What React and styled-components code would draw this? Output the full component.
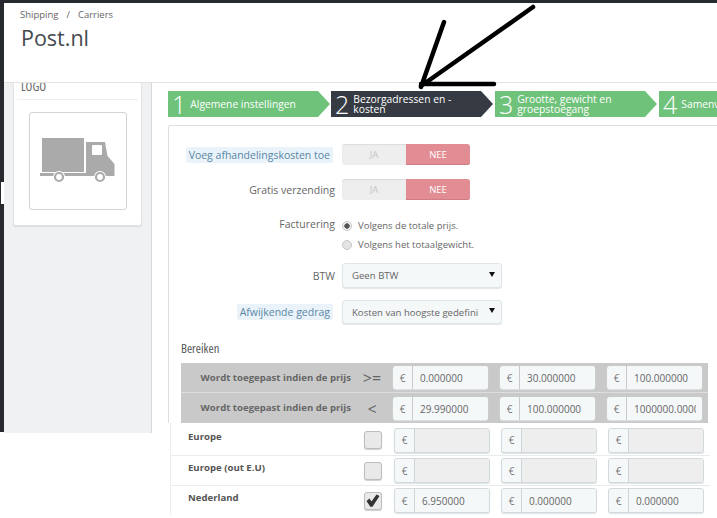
import React from "react"
import styled, { createGlobalStyle } from "styled-components"

const GlobalStyle = createGlobalStyle`
  html, body {
    margin: 0;
    padding: 0;
    background: #fff;
  }
  * {
    box-sizing: border-box;
  }
`

const Page = styled.div`
  position: relative;
  width: 717px;
  height: 518px;
  overflow: hidden;
  background: #fff;
  color: #666;
  font-family: "Open Sans", "Liberation Sans", sans-serif;
`

const TopStrip = styled.div`
  height: 3px;
  background: #262a2e;
`

const Shell = styled.div`
  display: flex;
  align-items: flex-start;
`

const Rail = styled.div`
  position: relative;
  flex: 0 0 4px;
  height: 429px;
  background: #262a2e;
`

const RailNotch = styled.span`
  position: absolute;
  left: 1px;
  top: 179px;
  width: 3px;
  height: 22px;
  background: #fff;
`

const Main = styled.div`
  flex: 1;
  min-width: 0;
`

const Header = styled.header`
  height: 80px;
  padding: 6px 0 0 16px;
  border-bottom: 1px solid #e2e2e2;
`

const Breadcrumb = styled.div`
  display: flex;
  gap: 8px;
  font-size: 9.5px;
  line-height: 11px;
  color: #666;
`

const Title = styled.h1`
  margin: 4px 0 0 1px;
  font-size: 21.5px;
  line-height: 28px;
  font-weight: 400;
  color: #454a4e;
`

const Body = styled.div`
  display: flex;
  align-items: flex-start;
`

const Sidebar = styled.aside`
  flex: 0 0 148px;
  height: 350px;
  padding: 0 9px;
  overflow: hidden;
  background: #eff1f2;
  border-right: 1px solid #d8d8d8;
`

const Card = styled.section`
  margin-top: -8px;
  height: 151px;
  padding: 0 3px;
  background: #fff;
  border: 1px solid #e2e4e5;
  border-radius: 3px;
  box-shadow: 0 1px 1px #d9dbdc;
`

const CardTitle = styled.h3`
  margin: 0;
  height: 24px;
  padding: 4px 0 0 4px;
  border-bottom: 1px solid #eee;
  font-size: 12.5px;
  line-height: 14px;
  font-weight: 400;
  font-stretch: 75%;
  color: #666;
`

const LogoBox = styled.div`
  display: flex;
  align-items: center;
  justify-content: center;
  width: 98px;
  height: 98px;
  margin: 12px 0 0 12px;
  border: 1px solid #d4d4d4;
  border-radius: 3px;
`

const Content = styled.div`
  flex: 1;
  min-width: 0;
  padding: 8px 0 0 16px;
`

const Steps = styled.ol`
  display: flex;
  gap: 1px;
  height: 26px;
  margin: 0;
  padding: 0;
  list-style: none;
`

const Step = styled.li`
  flex: 0 0 ${(p) => (p.$first ? 162 : 163)}px;
  display: flex;
  align-items: center;
  gap: 4px;
  padding-left: 4px;
  color: #fff;
  background: ${(p) => (p.$active ? "#363a42" : "#6fc27a")};
  clip-path: polygon(0 0, 150px 0, 162px 50%, 150px 100%, 0 100%);
`

const StepNumber = styled.span`
  font-size: 25px;
  line-height: 26px;
  font-weight: 300;
`

const StepLabel = styled.span`
  font-size: 10.3px;
  line-height: 10.5px;
  white-space: nowrap;
`

const Panel = styled.div`
  margin-top: 8px;
  height: 298px;
  padding: 18px 0 0 12px;
  border: 1px solid #dedede;
  border-right: 0;
  border-bottom: 0;
  border-radius: 3px 0 0 0;
`

const FormRow = styled.div`
  display: grid;
  grid-template-columns: 152px 160px;
  column-gap: 9px;
  align-items: ${(p) => (p.$top ? "start" : "center")};
  margin-top: ${(p) => p.$gap || 0}px;
`

const Label = styled.label`
  justify-self: end;
  margin-right: ${(p) => (p.$hint ? 0 : -2)}px;
  padding: ${(p) => (p.$hint ? "2px 3px" : "2px 0")};
  border-radius: 2px;
  font-size: 10.5px;
  line-height: 12px;
  color: ${(p) => (p.$hint ? "#5b87a8" : "#666")};
  background: ${(p) => (p.$hint ? "#e9f3f9" : "transparent")};
  white-space: nowrap;
`

const Switch = styled.div`
  display: grid;
  grid-template-columns: 64px 64px;
  width: 128px;
  height: 21px;
`

const SwitchOption = styled.span`
  display: flex;
  align-items: center;
  justify-content: center;
  font-size: 9.5px;
  border-radius: ${(p) => (p.$on ? "0 3px 3px 0" : "3px 0 0 3px")};
  color: ${(p) => (p.$on ? "#fff" : "#c4c4c4")};
  background: ${(p) => (p.$on ? "#e28c94" : "#eeeeee")};
  box-shadow: ${(p) =>
    p.$on ? "inset 0 -1px 0 #d07c84" : "inset 0 1px 1px #dcdcdc"};
`

const RadioGroup = styled.div`
  display: flex;
  flex-direction: column;
`

const RadioRow = styled.div`
  display: flex;
  align-items: center;
  gap: 6px;
  height: 19px;
  font-size: 9.5px;
  color: #666;
  white-space: nowrap;
`

const Radio = styled.span`
  width: 10px;
  height: 10px;
  border-radius: 50%;
  border: 1px solid #c6c6c6;
  background: ${(p) =>
    p.$on
      ? "radial-gradient(circle, #555 0 2.4px, #f2f2f2 3px)"
      : "#e4e4e4"};
`

const SelectBox = styled.div`
  display: flex;
  align-items: center;
  justify-content: space-between;
  height: ${(p) => p.$height}px;
  padding: 0 6px 0 9px;
  border: 1px solid #dfe5e8;
  border-radius: 3px;
  background: #f5f8f9;
  box-shadow: 0 1px 1px #e4e8ea;
`

const SelectText = styled.span`
  font-size: 9.6px;
  color: #666;
  white-space: nowrap;
`

const SelectCaret = styled.span`
  width: 0;
  height: 0;
  margin-bottom: 3px;
  border-left: 3px solid transparent;
  border-right: 3px solid transparent;
  border-top: 5px solid #111;
`

const SectionTitle = styled.h4`
  margin: 17px 0 6px;
  font-size: 12.5px;
  line-height: 16px;
  font-weight: 400;
  font-stretch: 75%;
  color: #555;
`

const RangeRow = styled.div`
  display: flex;
  align-items: center;
  gap: 12px;
  width: 527px;
  height: ${(p) => (p.$second ? 31 : 29)}px;
  padding-top: ${(p) => (p.$second ? 1 : 0)}px;
  background: #c9c9c9;
  border-top: ${(p) => (p.$second ? "1px solid #dedede" : "0")};
`

const RangeLead = styled.div`
  display: grid;
  grid-template-columns: 170px 42px;
  align-items: center;
  margin-right: -12px;
`

const RangeLabel = styled.span`
  justify-self: end;
  margin-top: ${(p) => (p.$second ? -2 : 0)}px;
  font-size: 9.6px;
  font-weight: 700;
  color: #666;
  white-space: nowrap;
`

const Operator = styled.span`
  justify-self: center;
  font-size: 16px;
  line-height: 16px;
  color: #666;
`

const PriceGroup = styled.div`
  display: flex;
  flex: 0 0 ${(p) => (p.$outlined ? 96 : 95)}px;
  height: ${(p) => (p.$outlined ? 25 : 23)}px;
  overflow: hidden;
  border-radius: 3px;
  border: ${(p) => (p.$outlined ? "1px solid #d3dadd" : "0")};
  box-shadow: 0 1px 1px #dfe3e5;
  background: #f5f8f9;
`

const PriceAddon = styled.span`
  display: flex;
  align-items: center;
  justify-content: center;
  flex: 0 0 20px;
  border-right: 1px solid ${(p) => (p.$outlined ? "#ccd4d8" : "#c9c9c9")};
  font-size: 10px;
  color: #777;
`

const PriceInput = styled.input`
  flex: 1;
  min-width: 0;
  padding: 0 6px 0 7px;
  border: 0;
  outline: 0;
  font-family: inherit;
  font-size: 10px;
  color: #666;
  background: ${(p) => (p.disabled ? "#eeeeee" : "#f5f8f9")};
`

const ZoneList = styled.div`
  width: 540px;
  margin-left: 2px;
  border-left: 1px solid #eee;
`

const ZoneRow = styled.div`
  display: flex;
  align-items: center;
  height: ${(p) => p.$height}px;
  padding: ${(p) => p.$pad}px 0 0 17px;
  border-bottom: ${(p) => (p.$last ? "0" : "1px solid #e8eced")};
`

const ZoneName = styled.span`
  flex: 0 0 176px;
  margin-top: -7px;
  font-size: 9.6px;
  font-weight: 700;
  color: #555;
`

const Checkbox = styled.span`
  display: flex;
  align-items: center;
  justify-content: center;
  flex: 0 0 18px;
  height: 18px;
  margin-right: 12px;
  border: 1px solid #bdbdbd;
  border-radius: 3px;
  background: #e9e9e9;
  box-shadow: 0 1px 1px #cfcfcf;
`

const ZonePrices = styled.div`
  display: flex;
  gap: 11px;
`

const Arrow = styled.svg`
  position: absolute;
  left: 0;
  top: 0;
  pointer-events: none;
`

const Truck = () => (
  <svg width="76" height="46" viewBox="40 139 76 46" fill="#aaa">
    <rect x="42" y="139" width="42" height="34" />
    <path d="M86 143H105L107.500 157L114.500 165V177H86Z" />
    <rect x="92" y="146" width="10" height="10" rx="1" fill="#fff" />
    <rect x="40" y="174" width="50" height="3" />
    <circle cx="59" cy="178" r="6" fill="#fff" />
    <circle cx="59" cy="178" r="4" fill="none" stroke="#aaa" strokeWidth="2.200" />
    <circle cx="100" cy="178" r="6" fill="#fff" />
    <circle cx="100" cy="178" r="4" fill="none" stroke="#aaa" strokeWidth="2.200" />
  </svg>
)

const Price = ({ value, outlined, disabled }) => (
  <PriceGroup $outlined={outlined}>
    <PriceAddon $outlined={outlined}>€</PriceAddon>
    <PriceInput readOnly disabled={disabled} defaultValue={value} />
  </PriceGroup>
)

const steps = [
  { n: 1, label: "Algemene instellingen", first: true },
  { n: 2, label: "Bezorgadressen en - kosten", active: true, width: 100 },
  { n: 3, label: "Grootte, gewicht en groepstoegang", width: 110 },
  { n: 4, label: "Samenv" },
]

const ranges = [
  { op: ">=", values: ["0.000000", "30.000000", "100.000000"] },
  { op: "<", values: ["29.990000", "100.000000", "1000000.000000"], second: true },
]

const zones = [
  { name: "Europe", height: 33, pad: 2, values: ["", "", ""], disabled: true },
  { name: "Europe (out E.U)", height: 30, pad: 0, values: ["", "", ""], disabled: true },
  { name: "Nederland", height: 29, pad: 0, checked: true, last: true, values: ["6.950000", "0.000000", "0.000000"] },
]

export default function App() {
  return (
    <Page>
      <GlobalStyle />
      <TopStrip />
      <Shell>
        <Rail>
          <RailNotch />
        </Rail>
        <Main>
          <Header>
            <Breadcrumb>
              <span>Shipping</span>
              <span>/</span>
              <span>Carriers</span>
            </Breadcrumb>
            <Title>Post.nl</Title>
          </Header>
          <Body>
            <Sidebar>
              <Card>
                <CardTitle>LOGO</CardTitle>
                <LogoBox>
                  <Truck />
                </LogoBox>
              </Card>
            </Sidebar>
            <Content>
              <Steps>
                {steps.map((s) => (
                  <Step key={s.n} $active={s.active} $first={s.first}>
                    <StepNumber>{s.n}</StepNumber>
                    <StepLabel style={s.width ? { width: s.width, whiteSpace: "normal" } : undefined}>
                      {s.label}
                    </StepLabel>
                  </Step>
                ))}
              </Steps>
              <Panel>
                <FormRow>
                  <Label $hint>Voeg afhandelingskosten toe</Label>
                  <Switch>
                    <SwitchOption>JA</SwitchOption>
                    <SwitchOption $on>NEE</SwitchOption>
                  </Switch>
                </FormRow>
                <FormRow $gap={14}>
                  <Label>Gratis verzending</Label>
                  <Switch>
                    <SwitchOption>JA</SwitchOption>
                    <SwitchOption $on>NEE</SwitchOption>
                  </Switch>
                </FormRow>
                <FormRow $gap={16} $top>
                  <Label>Facturering</Label>
                  <RadioGroup>
                    <RadioRow>
                      <Radio $on />
                      Volgens de totale prijs.
                    </RadioRow>
                    <RadioRow>
                      <Radio />
                      Volgens het totaalgewicht.
                    </RadioRow>
                  </RadioGroup>
                </FormRow>
                <FormRow $gap={9}>
                  <Label>BTW</Label>
                  <SelectBox $height={25}>
                    <SelectText>Geen BTW</SelectText>
                    <SelectCaret />
                  </SelectBox>
                </FormRow>
                <FormRow $gap={12}>
                  <Label $hint>Afwijkende gedrag</Label>
                  <SelectBox $height={24}>
                    <SelectText>Kosten van hoogste gedefini</SelectText>
                    <SelectCaret />
                  </SelectBox>
                </FormRow>
                <SectionTitle>Bereiken</SectionTitle>
                {ranges.map((r) => (
                  <RangeRow key={r.op} $second={r.second}>
                    <RangeLead>
                      <RangeLabel $second={r.second}>Wordt toegepast indien de prijs</RangeLabel>
                      <Operator>{r.op}</Operator>
                    </RangeLead>
                    {r.values.map((v) => (
                      <Price key={v} value={v} />
                    ))}
                  </RangeRow>
                ))}
              </Panel>
              <ZoneList>
                {zones.map((z) => (
                  <ZoneRow key={z.name} $height={z.height} $pad={z.pad} $last={z.last}>
                    <ZoneName>{z.name}</ZoneName>
                    <Checkbox>
                      {z.checked && (
                        <svg width="14" height="13" viewBox="0 0 14 13">
                          <path d="M0.500 7L3.500 4.500L5.500 7.500L10.500 0.500L13.500 2L6.500 12.800H4.300Z" fill="#333" />
                        </svg>
                      )}
                    </Checkbox>
                    <ZonePrices>
                      {z.values.map((v, i) => (
                        <Price key={i} value={v} outlined disabled={z.disabled} />
                      ))}
                    </ZonePrices>
                  </ZoneRow>
                ))}
              </ZoneList>
            </Content>
          </Body>
        </Main>
      </Shell>
      <Arrow width="717" height="518" viewBox="0 0 717 518">
        <path
          d="M533 7L421 86M444 22L421 87M421 84H494"
          fill="none"
          stroke="#000"
          strokeWidth="4.500"
          strokeLinecap="round"
        />
      </Arrow>
    </Page>
  )
}
